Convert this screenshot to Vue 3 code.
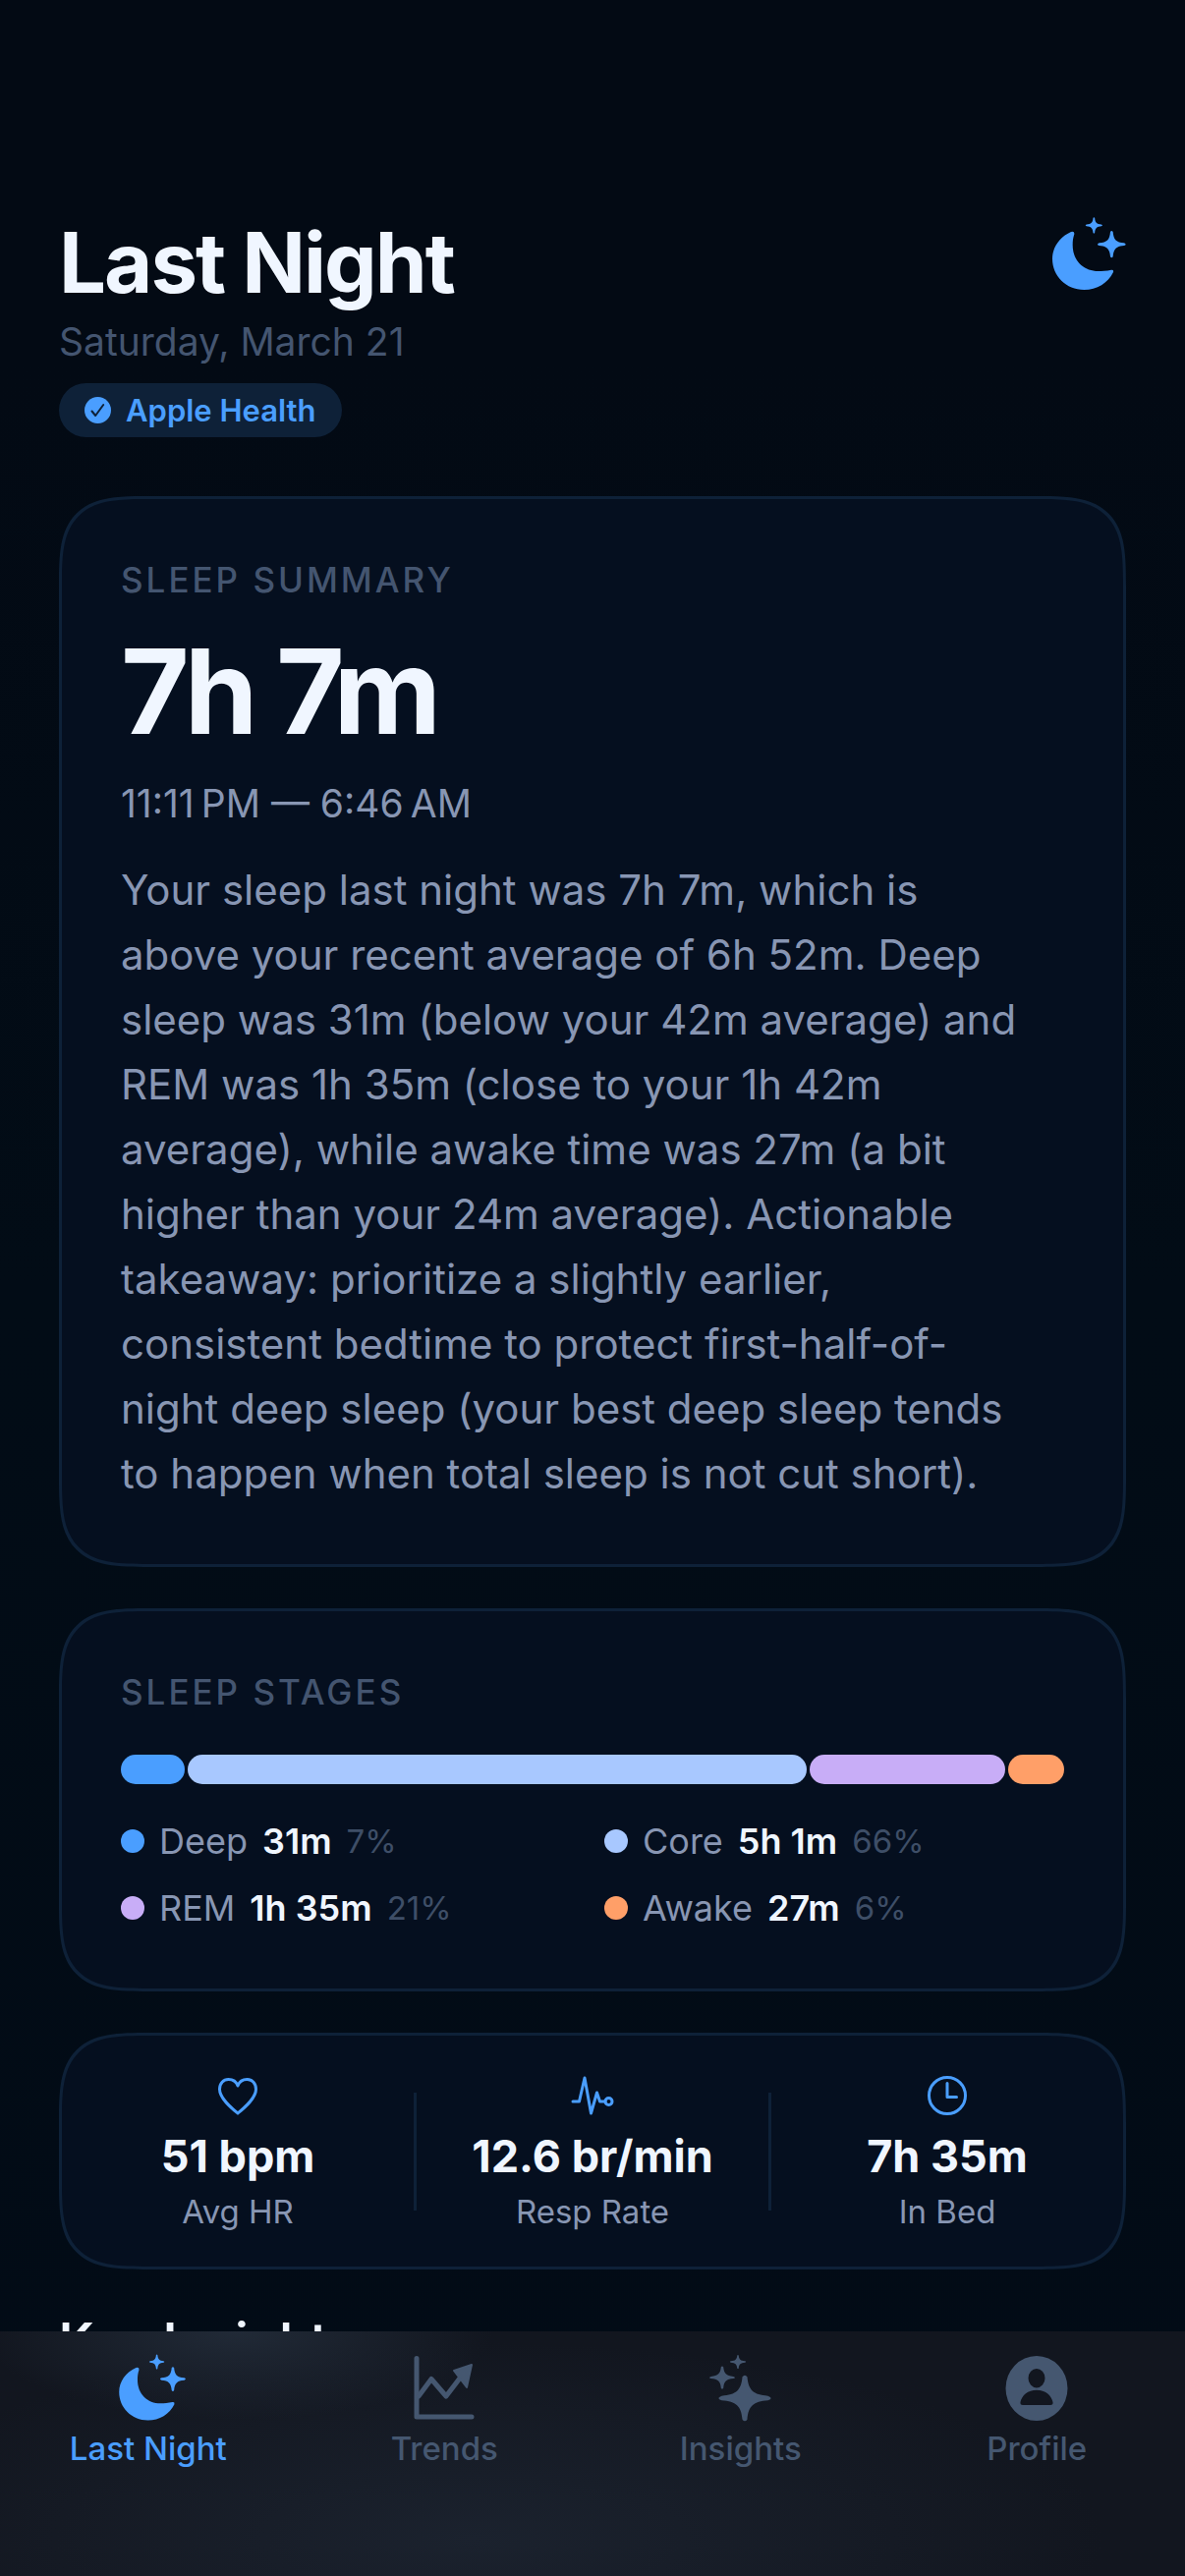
<template>
  <div class="screen">
    <main class="content">
      <header class="page-header">
        <div class="heading">
          <h1>Last Night</h1>
          <p class="date">Saturday, March 21</p>
          <span class="source-badge">
            <svg class="check-icon" viewBox="0 0 27 27" aria-hidden="true">
              <circle cx="13.5" cy="13.5" r="13.5" fill="currentColor" />
              <path d="M7.500 14.500l3.700 4.500 8-11" fill="none" stroke="#0e2138" stroke-width="2" stroke-linecap="round" stroke-linejoin="round" />
            </svg>
            Apple Health
          </span>
        </div>
        <svg class="moon-icon" viewBox="0 0 225 222" aria-hidden="true">
          <path :d="moonPath" fill="currentColor" />
          <path :d="starPath" transform="translate(181 83)" fill="currentColor" />
          <path :d="starPath" transform="translate(127 25) scale(.6)" fill="currentColor" />
        </svg>
      </header>

      <section class="card summary">
        <h2 class="card-label">SLEEP SUMMARY</h2>
        <p class="duration">7h 7m</p>
        <p class="range">11:11&#8239;PM — 6:46&#8239;AM</p>
        <p class="story">
          Your sleep last night was 7h 7m, which is above your recent average of 6h 52m. Deep sleep was 31m (below your 42m average) and REM was 1h 35m (close to your 1h 42m average), while awake time was 27m (a bit higher than your 24m average). Actionable takeaway: prioritize a slightly earlier, consistent bedtime to protect first-half-of-night deep sleep (your best deep sleep tends to happen when total sleep is not cut short).
        </p>
      </section>

      <section class="card stages">
        <h2 class="card-label">SLEEP STAGES</h2>
        <div class="stage-bar">
          <span
            v-for="stage in stages"
            :key="stage.name"
            :class="['segment', stage.key]"
            :style="{ flexGrow: stage.minutes }"
          ></span>
        </div>
        <ul class="legend">
          <li v-for="stage in stages" :key="stage.name">
            <span :class="['dot', stage.key]"></span>
            <span class="stage-name">{{ stage.name }}</span>
            <strong>{{ stage.time }}</strong>
            <span class="percent">{{ stage.percent }}%</span>
          </li>
        </ul>
      </section>

      <section class="card stats">
        <div class="stat">
          <svg viewBox="0 0 48 48" aria-hidden="true">
            <path d="M24 43C18 38 5.500 28 5.500 18.500C5.500 12.500 9.500 8.500 14.500 8.500C19 8.500 22.500 11 24 15C25.500 11 29 8.500 33.500 8.500C38.500 8.500 42.500 12.500 42.500 18.500C42.500 28 30 38 24 43Z" />
          </svg>
          <strong>51 bpm</strong>
          <span>Avg HR</span>
        </div>
        <div class="divider"></div>
        <div class="stat">
          <svg viewBox="0 0 48 48" aria-hidden="true">
            <path d="M4 31H10.500L16 7L22.500 43L28.500 22L31.500 31H37" />
            <circle cx="40.500" cy="31" r="3.500" />
          </svg>
          <strong>12.6 br/min</strong>
          <span>Resp Rate</span>
        </div>
        <div class="divider"></div>
        <div class="stat">
          <svg viewBox="0 0 48 48" aria-hidden="true">
            <circle cx="24" cy="25" r="18.500" />
            <path d="M24 12.500V26.500H33.500" />
          </svg>
          <strong>7h 35m</strong>
          <span>In Bed</span>
        </div>
      </section>

      <h2 class="section-title">Key Insights</h2>
    </main>

    <nav class="tab-bar">
      <button type="button" :class="{ active: tab === 'night' }" @click="tab = 'night'">
        <svg viewBox="-14 0 225 222" aria-hidden="true">
          <path :d="moonPath" fill="currentColor" />
          <path :d="starPath" transform="translate(181 83)" fill="currentColor" />
          <path :d="starPath" transform="translate(127 25) scale(.6)" fill="currentColor" />
        </svg>
        Last Night
      </button>
      <button type="button" :class="{ active: tab === 'trends' }" @click="tab = 'trends'">
        <svg viewBox="0 0 68 68" aria-hidden="true">
          <g fill="none" stroke="currentColor" stroke-width="5" stroke-linecap="round" stroke-linejoin="round">
            <path d="M6 4.500V64H62" />
            <path d="M8 43L21 25.500L36 43L52 22" />
          </g>
          <path d="M62 11L44 17L57 34Z" fill="currentColor" stroke="currentColor" stroke-width="2" stroke-linejoin="round" />
        </svg>
        Trends
      </button>
      <button type="button" :class="{ active: tab === 'insights' }" @click="tab = 'insights'">
        <svg viewBox="0 0 68 68" aria-hidden="true">
          <path :d="starPath" transform="translate(38 45) scale(.62 .57)" fill="currentColor" />
          <path :d="starPath" transform="translate(15 24) scale(.3 .28)" fill="currentColor" />
          <path :d="starPath" transform="translate(31 8) scale(.19 .17)" fill="currentColor" />
        </svg>
        Insights
      </button>
      <button type="button" :class="{ active: tab === 'profile' }" @click="tab = 'profile'">
        <svg viewBox="0 0 68 68" aria-hidden="true">
          <path
            fill="currentColor"
            fill-rule="evenodd"
            d="M34 2a31.500 33 0 1 1 0 66a31.500 33 0 1 1 0-66zM34 15a8.500 9.700 0 1 0 0 19.400a8.500 9.700 0 1 0 0-19.400zM34 36.700C25 36.700 19 42 17.500 49Q17 52 20 52H48Q51 52 50.500 49C49 42 43 36.700 34 36.700z"
          />
        </svg>
        Profile
      </button>
    </nav>
  </div>
</template>

<script setup>
import { ref } from 'vue'

const tab = ref('night')

const stages = [
  { key: 'deep', name: 'Deep', minutes: 31, time: '31m', percent: 7 },
  { key: 'core', name: 'Core', minutes: 301, time: '5h 1m', percent: 66 },
  { key: 'rem', name: 'REM', minutes: 95, time: '1h 35m', percent: 21 },
  { key: 'awake', name: 'Awake', minutes: 27, time: '27m', percent: 6 }
]

// Shapes shared by the header and the tab bar
const moonPath =
  'M57 45C23 60 0 92 0 127C0 180 42 222 97 222C136 222 170 201 186 168Q188 160 180 161C165 164 152 165 140 165C95 165 62 133 62 85C62 74 63 64 67 52Q68 42 57 45Z'
const starPath =
  'M-4 -38Q0 -44 4 -38C6 -14 14 -6 38 -4Q48 0 38 4C14 6 6 14 4 38Q0 44 -4 38C-6 14 -14 6 -38 4Q-48 0 -38 -4C-14 -6 -6 -14 -4 -38Z'
</script>

<style>
body {
  background: #030a14;
}
</style>

<style scoped>
.screen {
  --text: #f0f6ff;
  --text-soft: #8896b3;
  --text-muted: #445570;
  --blue: #4a9eff;
  --line: #0e2138;
  min-height: 100vh;
  box-sizing: border-box;
  background: linear-gradient(#030a14 0%, #030a14 14%, #020c16 50%, #020b16 100%);
  color: var(--text);
  font-family: Inter, "Liberation Sans", sans-serif;
}

h1,
h2,
p,
ul {
  margin: 0;
  padding: 0;
}

.content {
  display: flex;
  flex-direction: column;
  gap: 42px;
  padding: 217px 60px 180px;
}

.page-header {
  display: flex;
  justify-content: space-between;
  margin-bottom: 18px;
}

.heading {
  display: flex;
  flex-direction: column;
  align-items: flex-start;
}

h1 {
  font-size: 85px;
  line-height: 102px;
  font-weight: 700;
  letter-spacing: -2px;
}

.date {
  margin-top: 5px;
  font-size: 39px;
  line-height: 48px;
  color: var(--text-muted);
}

.source-badge {
  display: flex;
  align-items: center;
  gap: 15px;
  margin-top: 18px;
  padding: 0 26px;
  height: 55px;
  border-radius: 28px;
  background: var(--line);
  color: var(--blue);
  font-size: 31px;
  font-weight: 600;
}

.check-icon {
  width: 27px;
  height: 27px;
}

.moon-icon {
  width: 75px;
  height: 74px;
  margin-top: 4px;
  color: var(--blue);
}

.card {
  border: 3px solid var(--line);
  border-radius: 64px;
  background: #050f1f;
}

/* Continuous corners where the browser can draw them */
@supports (corner-shape: squircle) {
  .card {
    border-radius: 92px;
    corner-shape: superellipse(1.7);
  }
}

.summary,
.stages {
  padding: 60px;
}

.card-label {
  font-size: 35px;
  line-height: 44px;
  font-weight: 500;
  letter-spacing: 3px;
  color: var(--text-muted);
}

.duration {
  margin-top: 19px;
  font-size: 120px;
  line-height: 146px;
  font-weight: 700;
  letter-spacing: -5px;
}

.range {
  margin-top: 17px;
  font-size: 39px;
  line-height: 48px;
  color: var(--text-soft);
}

.story {
  margin-top: 31px;
  padding-right: 36px;
  font-size: 42px;
  line-height: 66px;
  color: var(--text-soft);
}

.stage-bar {
  display: flex;
  gap: 3px;
  height: 30px;
  margin-top: 42px;
}

.summary {
  padding-bottom: 59px;
}

.segment {
  flex-basis: 0;
  border-radius: 15px;
}

.deep {
  background: #4a9eff;
}

.core {
  background: #a8c8ff;
}

.rem {
  background: #c8adf7;
}

.awake {
  background: #ff9f68;
}

.legend {
  display: grid;
  grid-template-columns: 1fr 1fr;
  gap: 24px;
  margin-top: 36px;
  list-style: none;
}

.legend li {
  display: flex;
  align-items: center;
  gap: 15px;
  font-size: 36px;
  line-height: 44px;
}

.legend strong {
  font-weight: 600;
}

.dot {
  width: 24px;
  height: 24px;
  border-radius: 50%;
}

.stage-name {
  color: var(--text-soft);
}

.legend .percent {
  font-size: 33px;
  color: #3e4e67;
}

.stats {
  display: flex;
  align-items: center;
  padding: 36px 0;
}

.stat {
  flex: 1;
  display: flex;
  flex-direction: column;
  align-items: center;
}

.divider {
  width: 3px;
  height: 120px;
  background: var(--line);
}

.stat svg {
  width: 48px;
  height: 48px;
  fill: none;
  stroke: var(--blue);
  stroke-width: 3;
  stroke-linecap: round;
  stroke-linejoin: round;
}

.stat strong {
  margin-top: 12px;
  font-size: 45px;
  line-height: 54px;
  font-weight: 700;
}

.stat span {
  margin-top: 9px;
  font-size: 33px;
  line-height: 40px;
  color: var(--text-soft);
}

.section-title {
  font-size: 51px;
  line-height: 62px;
  font-weight: 600;
}

.tab-bar {
  position: fixed;
  left: 0;
  right: 0;
  bottom: 0;
  display: grid;
  grid-template-columns: repeat(4, 1fr);
  height: 249px;
  background:
    radial-gradient(ellipse 260px 90px at 20% 0, #212a37, transparent),
    radial-gradient(ellipse 640px 200px at 40% 85%, #1b222e, transparent),
    #12161f;
}

.tab-bar button {
  display: flex;
  flex-direction: column;
  align-items: center;
  padding: 23px 0 0;
  border: 0;
  background: none;
  color: #455770;
  font-family: inherit;
  font-size: 33px;
  line-height: 40px;
  font-weight: 500;
  cursor: pointer;
}

.tab-bar button.active {
  color: var(--blue);
}

.tab-bar svg {
  width: 68px;
  height: 68px;
  margin-bottom: 8px;
  overflow: visible;
}
</style>
